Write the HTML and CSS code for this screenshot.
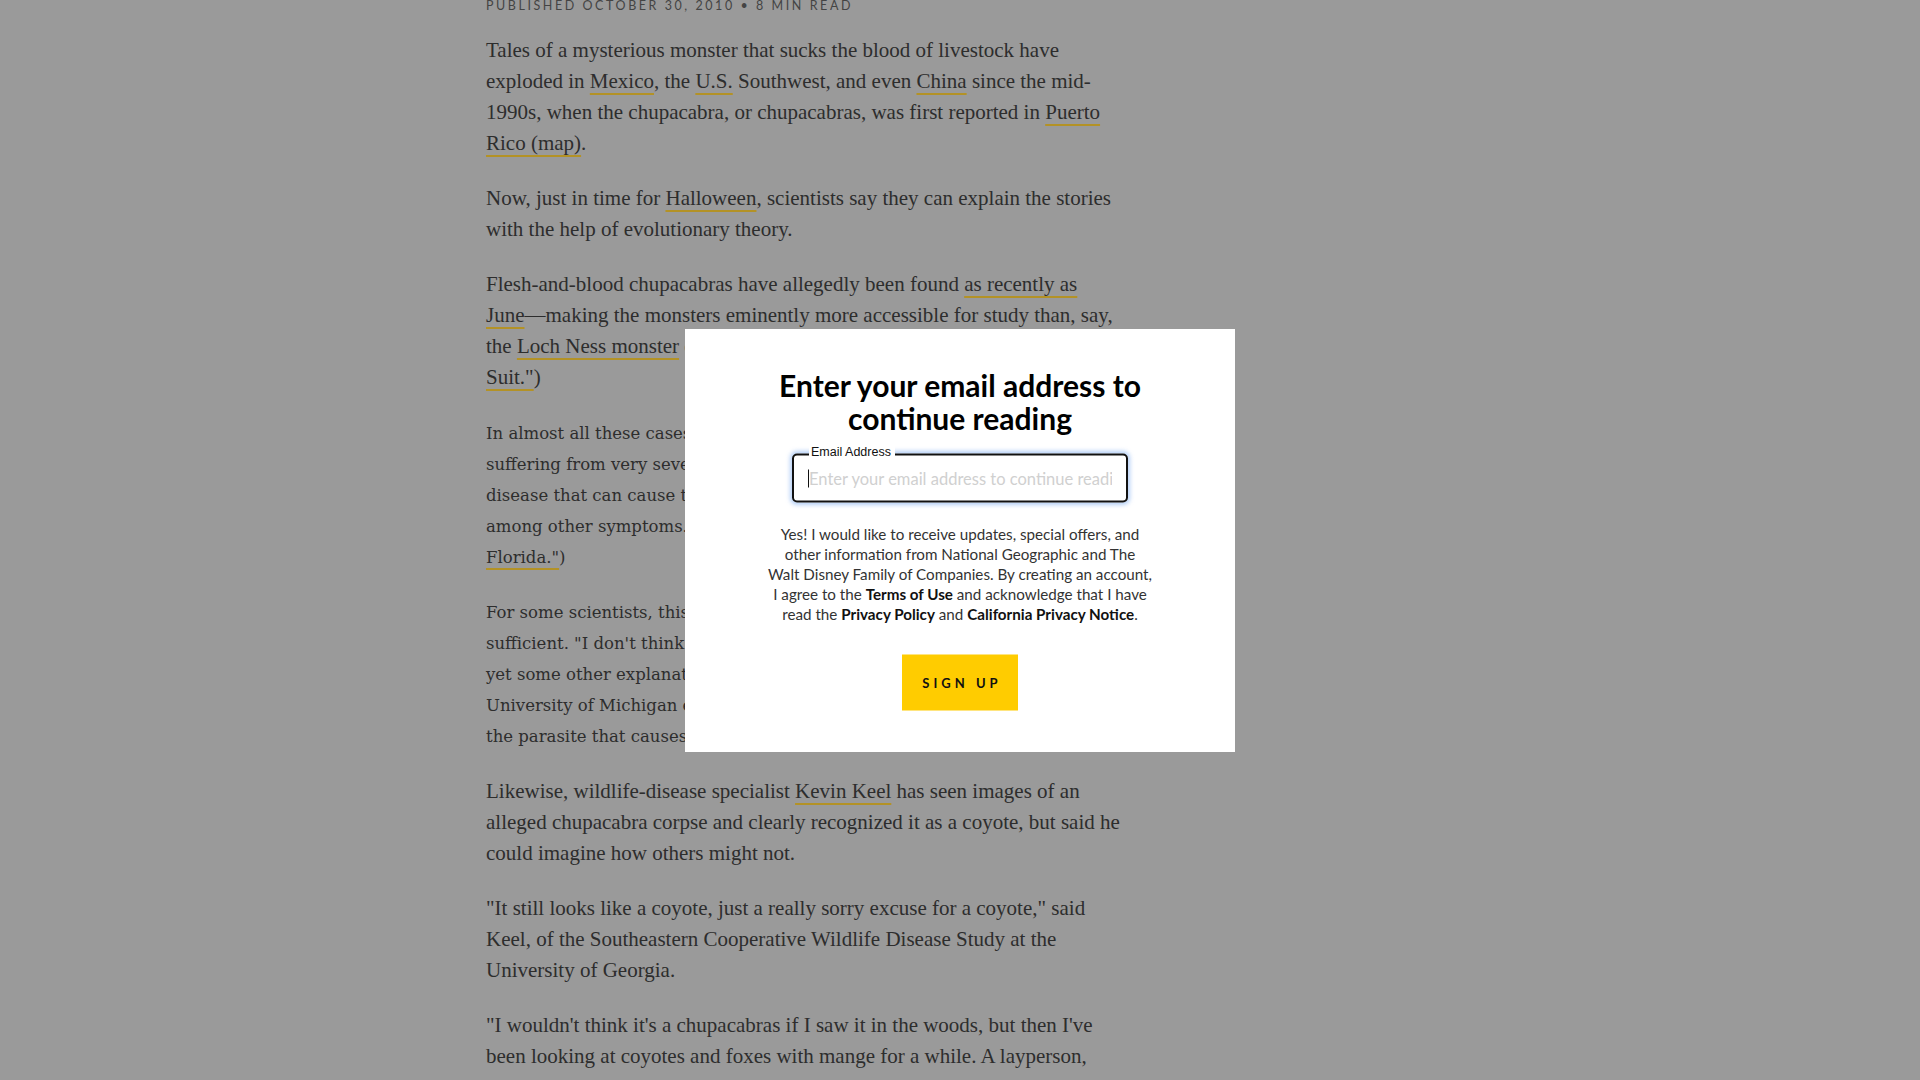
FILE: index.html
```html
<!DOCTYPE html>
<html lang="en">
<head>
<meta charset="utf-8">
<title>Chupacabras Explained</title>
<link rel="stylesheet" href="styles.css">
</head>
<body>
<main class="article">
  <div class="byline">PUBLISHED OCTOBER 30, 2010 &bull; 8 MIN READ</div>
  <p>Tales of a mysterious monster that sucks the blood of livestock have exploded in <a href="#">Mexico</a>, the <a href="#">U.S.</a> Southwest, and even <a href="#">China</a> since the mid-1990s, when the chupacabra, or chupacabras, was first reported in <a href="#">Puerto Rico (map)</a>.</p>
  <p>Now, just in time for <a href="#">Halloween</a>, scientists say they can explain the stories with the help of evolutionary theory.</p>
  <p>Flesh-and-blood chupacabras have allegedly been found <a href="#">as recently as<br>June</a>&mdash;making the monsters eminently more accessible for study than, say,<br>the <a href="#">Loch Ness monster</a> or Bigfoot. (Related: "Bigfoot Was Man in Gorilla<br><a href="#">Suit."</a>)</p>
  <p class="wide">In almost all these cases, the chupacabras turned out to be coyotes<br>suffering from very severe cases of mange, a parasitic skin<br>disease that can cause the animals to lose their hair,<br>among other symptoms. (Related: "'Chupacabra' Captured in<br><a href="#">Florida."</a>)</p>
  <p class="wide">For some scientists, this explanation is more than<br>sufficient. "I don't think there needs to be a legend or<br>yet some other explanation," said Barry OConnor, a<br>University of Michigan entomologist who studies<br>the parasite that causes mange.</p>
  <p>Likewise, wildlife-disease specialist <a href="#">Kevin Keel</a> has seen images of an alleged chupacabra corpse and clearly recognized it as a coyote, but said he could imagine how others might not.</p>
  <p>"It still looks like a coyote, just a really sorry excuse for a coyote," said Keel, of the Southeastern Cooperative Wildlife Disease Study at the University of Georgia.</p>
  <p>"I wouldn't think it's a chupacabras if I saw it in the woods, but then I've been looking at coyotes and foxes with mange for a while. A layperson, though, might not know what it is."</p>
</main>

<section class="modal">
  <h2 class="modal-title">Enter your email address to continue reading</h2>
  <div class="field">
    <label class="field-label" for="email">Email Address</label>
    <div class="field-box">
      <span class="caret"></span>
      <input id="email" class="field-input" type="email" placeholder="Enter your email address to continue reading">
    </div>
  </div>
  <p class="consent">Yes! I would like to receive updates, special offers, and<br>other information from National Geographic and The<br>Walt Disney Family of Companies. By creating an account,<br>I agree to the <b>Terms of Use</b> and acknowledge that I have<br>read the <b>Privacy Policy</b> and <b>California Privacy Notice</b>.</p>
  <button class="signup" type="button">SIGN UP</button>
</section>
</body>
</html>
```

FILE: styles.css
```css
html, body {
  margin: 0;
  padding: 0;
  height: 100%;
  overflow: hidden;
}
body {
  background: #9a9a9a;
  font-family: "Liberation Serif", serif;
}
.article {
  width: 640px;
  margin: -1px 0 0 486px;
  color: #2d2d2d;
}
.byline {
  font-family: Lato, "Noto Sans", sans-serif;
  font-size: 12.5px;
  line-height: 14px;
  letter-spacing: 2.56px;
  color: #444;
  margin-bottom: 22px;
}
.article p {
  font-size: 21px;
  line-height: 31px;
  margin: 0 0 24.2px;
}
.article p.wide {
  font-family: "DejaVu Serif", serif;
  font-size: 16.5px;
}
.article a {
  color: inherit;
  text-decoration: underline;
  text-decoration-color: #b39226;
  text-decoration-thickness: 2px;
  text-underline-offset: 5px;
}
.modal {
  position: fixed;
  top: 50%;
  left: 50%;
  transform: translate(-50%, -50%);
  width: 550px;
  height: 423px;
  box-sizing: border-box;
  background: #fff;
  padding: 40px 0 0;
  display: flex;
  flex-direction: column;
  align-items: center;
  font-family: Lato, "Noto Sans", sans-serif;
}
.modal-title {
  margin: 0;
  width: 400px;
  text-align: center;
  font-size: 30px;
  line-height: 33px;
  font-weight: 700;
  color: #000;
}
.field {
  position: relative;
  margin-top: 19px;
  width: 336px;
}
.field-label {
  position: absolute;
  left: 17px;
  top: -9px;
  padding: 0 4px 0 2px;
  background: #fff;
  font-family: "Liberation Sans", Arial, sans-serif;
  font-size: 12.5px;
  line-height: 14px;
  color: #111;
}
.field-box {
  height: 49px;
  box-sizing: border-box;
  border: 2px solid #111;
  border-radius: 5px;
  box-shadow: 0 0 4px 2px rgba(120, 170, 240, 0.55);
  display: flex;
  align-items: center;
  padding: 0 14px 0 14px;
}
.caret {
  width: 1px;
  height: 18px;
  background: #111;
  flex: none;
}
.field-input {
  flex: 1;
  min-width: 0;
  border: 0;
  outline: none;
  padding: 0;
  background: transparent;
  font-family: Lato, "Noto Sans", sans-serif;
  font-size: 16.5px;
  color: #111;
}
.field-input::placeholder {
  color: #d0d0d0;
}
.consent {
  margin: 21px 0 0;
  width: 420px;
  text-align: center;
  font-size: 15.2px;
  line-height: 20px;
  color: #333;
}
.consent b {
  color: #111;
  font-weight: 700;
}
.signup {
  margin-top: 31px;
  width: 116px;
  height: 56px;
  border: 0;
  background: #ffcc00;
  font-family: Lato, "Noto Sans", sans-serif;
  font-weight: 700;
  font-size: 13px;
  letter-spacing: 4px;
  padding: 0 0 0 4px;
  color: #111;
}
```
